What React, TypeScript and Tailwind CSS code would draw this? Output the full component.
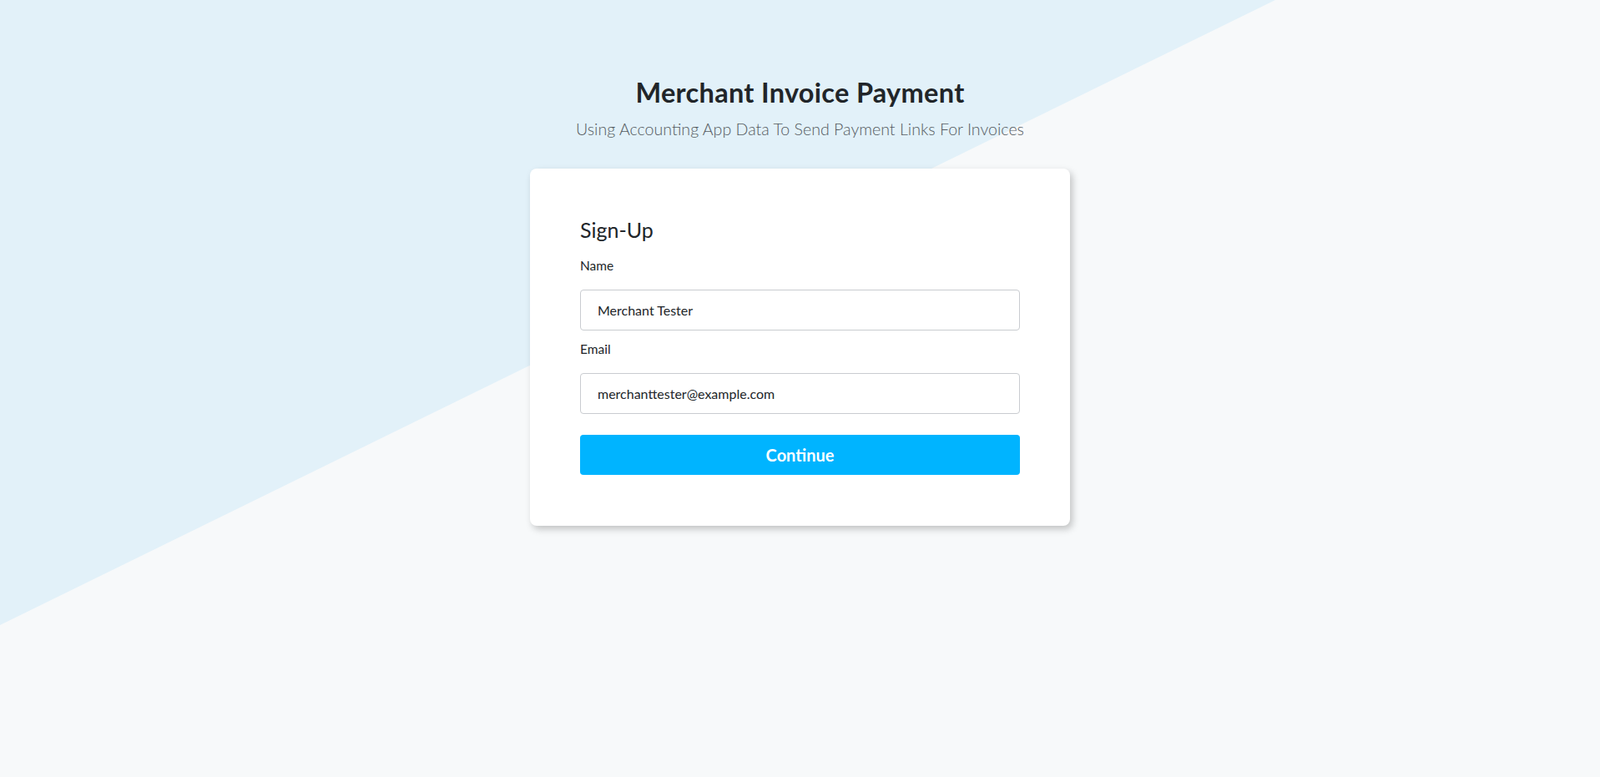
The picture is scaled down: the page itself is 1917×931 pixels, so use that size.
export default function App() {
  return (
    <div className="relative min-h-[931px] w-full overflow-hidden bg-[#f7f9fa] font-['Lato','Noto_Sans',sans-serif] text-[#212529]">
      {/* diagonal backdrop */}
      <svg
        className="absolute inset-0 h-full w-full"
        viewBox="0 0 1917 931"
        preserveAspectRatio="none"
      >
        <polygon points="0,0 1528,0 0,749" fill="#e2f1f9" />
      </svg>

      <div className="relative flex flex-col items-center pt-[91px]">
        <h1 className="text-[32.5px] leading-[40px] font-bold tracking-[0.3px]">Merchant Invoice Payment</h1>
        <p className="mt-[10px] text-[19.6px] leading-[28px] font-light text-[#555b61]">
          Using Accounting App Data To Send Payment Links For Invoices
        </p>

        <div className="mt-[33px] w-[647px] rounded-lg bg-white px-[60px] pt-[57px] pb-[61px] shadow-[3px_4px_8px_rgba(0,0,0,0.22)]">
          <h2 className="text-[25px] leading-[32px]">Sign-Up</h2>

          <label className="mt-[15px] block text-[15.5px] leading-[24px]">Name</label>
          <input
            defaultValue="Merchant Tester"
            className="mt-[17px] block h-[49px] w-full rounded border border-[#c9ccd0] px-[20px] text-[16px] outline-none"
          />

          <label className="mt-[10px] block text-[15.5px] leading-[24px]">Email</label>
          <input
            defaultValue="merchanttester@example.com"
            className="mt-[17px] block h-[49px] w-full rounded border border-[#c9ccd0] px-[20px] text-[16px] outline-none"
          />

          <button className="mt-[25px] h-[48px] w-full rounded bg-[#00b4ff] text-[20px] font-bold text-white">
            Continue
          </button>
        </div>
      </div>
    </div>
  );
}
